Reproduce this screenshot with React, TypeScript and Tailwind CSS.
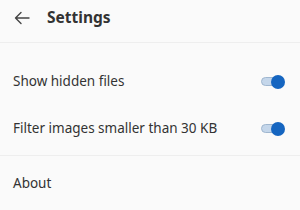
import React from 'react';

function Toggle() {
  return (
    <div className="relative w-[24px] h-[14px] flex items-center">
      <div className="absolute left-0 right-[3px] h-[9px] rounded-full bg-[#c4d6ea] border border-[#9fb6cf]" />
      <div className="absolute right-0 w-[14px] h-[14px] rounded-full bg-[#1565c0]" />
    </div>
  );
}

function SwitchRow({ label }: { label: string }) {
  return (
    <div className="h-[47px] flex items-center justify-between pl-[13px] pr-[15px]">
      <span className="text-[13.5px] text-[#333]">{label}</span>
      <Toggle />
    </div>
  );
}

export default function App() {
  return (
    <div
      className="w-[300px] h-[210px] bg-[#fafafa] overflow-hidden"
      style={{ fontFamily: '"Noto Sans", "Open Sans", sans-serif' }}
    >
      <div className="h-[43px] flex items-start pt-[7px] border-b border-[#eeeeee]">
        <div className="h-[22px] flex items-center">
          <svg className="ml-[14px]" width="16" height="14" viewBox="0 0 16 14" fill="none" stroke="#444" strokeWidth="1.4" strokeLinecap="round" strokeLinejoin="round">
            <path d="M15 7H1.5M7 1.5L1.5 7L7 12.5" />
          </svg>
          <span className="ml-[17px] text-[15.5px] font-bold text-[#333]">Settings</span>
        </div>
      </div>
      <div className="pt-[15px] pb-[3px] border-b border-[#eeeeee]">
        <SwitchRow label="Show hidden files" />
        <SwitchRow label="Filter images smaller than 30 KB" />
      </div>
      <div className="h-[54px] flex items-center pl-[13px]">
        <span className="text-[13.5px] text-[#333]">About</span>
      </div>
    </div>
  );
}
